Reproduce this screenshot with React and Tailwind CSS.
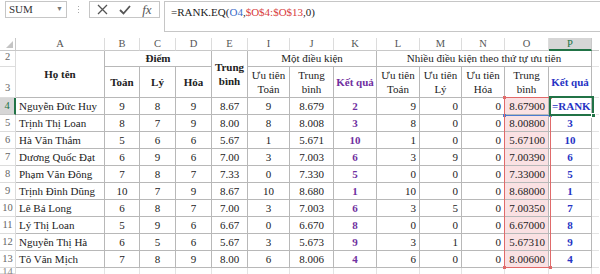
import React from 'react';

const rows = [
  ['Nguyễn Đức Huy', 9, 8, 9, '8.67', 9, '8.679', 2, 9, 0, 0, '8.67900', null],
  ['Trịnh Thị Loan', 8, 7, 9, '8.00', 8, '8.008', 3, 8, 0, 0, '8.00800', 3],
  ['Hà Văn Thắm', 5, 6, 6, '5.67', 1, '5.671', 10, 1, 0, 0, '5.67100', 10],
  ['Dương Quốc Đạt', 6, 9, 6, '7.00', 3, '7.003', 6, 3, 9, 0, '7.00390', 6],
  ['Phạm Văn Đông', 7, 8, 7, '7.33', 0, '7.330', 5, 0, 0, 0, '7.33000', 5],
  ['Trịnh Đình Dũng', 10, 7, 9, '8.67', 10, '8.680', 1, 10, 0, 0, '8.68000', 1],
  ['Lê Bá Long', 6, 8, 7, '7.00', 3, '7.003', 6, 3, 5, 0, '7.00350', 7],
  ['Lý Thị Loan', 5, 9, 6, '6.67', 0, '6.670', 8, 0, 0, 0, '6.67000', 8],
  ['Nguyễn Thị Hà', 6, 5, 6, '5.67', 3, '5.673', 9, 3, 1, 0, '5.67310', 9],
  ['Tô Văn Mịch', 7, 8, 9, '8.00', 6, '8.006', 4, 6, 0, 0, '8.00600', 4],
];

const letters = ['A', 'B', 'C', 'D', 'E', 'I', 'J', 'K', 'L', 'M', 'N', 'O', 'P'];

const Cell = ({ children, className = '' }) => (
  <div className={`border-r border-b border-[#b8b8b8] flex items-center overflow-hidden whitespace-nowrap px-[3px] ${className}`}>
    {children}
  </div>
);

const RowNum = ({ n, active, className = '' }) => (
  <div className={`border-r border-b flex justify-center text-[10.5px] ${active ? 'bg-[#d6d6d6] border-r-2 border-r-[#217346] border-b-[#c8c8c8] text-[#217346]' : 'border-[#dcdcdc] text-[#666]'} ${className}`}>
    {n}
  </div>
);

const Blank = () => <div className="border-b border-[#e3e3e3]" />;

export default function App() {
  return (
    <div className="w-[600px] h-[274px] overflow-hidden bg-white font-['Liberation_Serif',serif] text-[11px] text-[#222]">
      {/* formula bar */}
      <div className="flex h-[38px] items-start pt-[1px]">
        <div className="ml-[5px] w-[62px] h-[17px] border border-[#c6c6c6] flex items-center justify-between px-[3px] text-[11px] text-[#333]">
          <span>SUM</span>
          <span className="text-[7px] text-[#777]">▼</span>
        </div>
        <div className="w-[22px] h-[17px] flex flex-col items-center justify-center gap-[2px]">
          <span className="w-[1px] h-[1px] bg-[#aaa]" />
          <span className="w-[1px] h-[1px] bg-[#aaa]" />
          <span className="w-[1px] h-[1px] bg-[#aaa]" />
        </div>
        <div className="w-[71px] h-[17px] border border-[#c6c6c6] flex items-center justify-around px-[2px]">
          <svg width="11" height="11" viewBox="0 0 11 11" fill="none" stroke="#555" strokeWidth="1.3">
            <path d="M1 1 L10 10 M10 1 L1 10" />
          </svg>
          <svg width="12" height="10" viewBox="0 0 12 10" fill="none" stroke="#555" strokeWidth="1.8">
            <path d="M1 5 L4.5 8.5 L11 1" />
          </svg>
          <span className="italic text-[13px] text-[#555] leading-none">fx</span>
        </div>
        <div className="ml-[4px] flex-1 h-[31px] border border-r-0 border-[#c6c6c6] px-[6px] pt-[2px] text-[11px] text-[#222]">
          =RANK.EQ(<span className="text-[#3a6cc8]">O4</span>,<span className="text-[#d83b3b]">$O$4:$O$13</span>,0)
        </div>
      </div>

      {/* sheet */}
      <div className="relative">
        <div className="grid grid-cols-[16px_89px_35px_36px_36px_36px_42px_44px_43px_43px_42px_43px_44px_43px_7px] grid-rows-[13px_16px_31px_repeat(10,17px)_6px]">
          {/* column header */}
          <div className="border-r border-b border-[#c8c8c8] flex items-end justify-end pr-[2px] pb-[2px]">
            <svg width="7" height="7" viewBox="0 0 7 7"><path d="M7 0 L7 7 L0 7 Z" fill="#c4c4c4" /></svg>
          </div>
          {letters.map((l) => (
            <div
              key={l}
              className={`flex items-center justify-center text-[10.5px] border-b ${l === 'P' ? 'bg-[#d6d6d6] border-b-2 border-b-[#217346] text-[#217346] border-r border-r-[#c8c8c8]' : 'border-r border-[#dcdcdc] border-b-[#c8c8c8] text-[#555]'}`}
            >
              {l}
            </div>
          ))}
          <div className="border-b border-[#c8c8c8]" />

          {/* row 2 */}
          <RowNum n="2" className="items-end pb-[1px]" />
          <Cell className="row-span-2 justify-center font-bold">Họ tên</Cell>
          <Cell className="col-span-3 justify-center font-bold">Điểm</Cell>
          <Cell className="row-span-2 justify-center font-bold text-center leading-[14px] whitespace-normal">Trung<br />bình</Cell>
          <Cell className="col-span-3 justify-center">Một điều kiện</Cell>
          <Cell className="col-span-5 justify-center">Nhiều điều kiện theo thứ tự ưu tiên</Cell>
          <Blank />

          {/* row 3 */}
          <RowNum n="3" className="items-end pb-[1px]" />
          <Cell className="justify-center font-bold">Toán</Cell>
          <Cell className="justify-center font-bold">Lý</Cell>
          <Cell className="justify-center font-bold">Hóa</Cell>
          <Cell className="justify-center text-center leading-[14px]">Ưu tiên<br />Toán</Cell>
          <Cell className="justify-center text-center leading-[14px]">Trung<br />bình</Cell>
          <Cell className="justify-center font-bold text-[#7030a0]">Kết quả</Cell>
          <Cell className="justify-center text-center leading-[14px]">Ưu tiên<br />Toán</Cell>
          <Cell className="justify-center text-center leading-[14px]">Ưu tiên<br />Lý</Cell>
          <Cell className="justify-center text-center leading-[14px]">Ưu tiên<br />Hóa</Cell>
          <Cell className="justify-center text-center leading-[14px]">Trung<br />bình</Cell>
          <Cell className="justify-center font-bold text-[#2633c4]">Kết quả</Cell>
          <Blank />

          {/* data */}
          {rows.map((r, i) => (
            <React.Fragment key={i}>
              <RowNum n={i + 4} active={i === 0} className="items-center" />
              <Cell>{r[0]}</Cell>
              <Cell className="justify-center">{r[1]}</Cell>
              <Cell className="justify-center">{r[2]}</Cell>
              <Cell className="justify-center">{r[3]}</Cell>
              <Cell className="justify-center">{r[4]}</Cell>
              <Cell className="justify-center">{r[5]}</Cell>
              <Cell className="justify-center">{r[6]}</Cell>
              <Cell className="justify-center font-bold text-[#7030a0]">{r[7]}</Cell>
              <Cell className="justify-end">{r[8]}</Cell>
              <Cell className="justify-end">{r[9]}</Cell>
              <Cell className="justify-end">{r[10]}</Cell>
              <Cell className="justify-end bg-[#fae1e3]">{r[11]}</Cell>
              <Cell className="justify-start font-bold text-[#2633c4]">
                {r[12] === null ? '=RANK.' : <span className="w-full text-center">{r[12]}</span>}
              </Cell>
              <Blank />
            </React.Fragment>
          ))}

          {/* row 14 */}
          <RowNum n="14" className="items-start leading-[8px] text-[#888]" />
          {letters.map((l) => (
            <div key={l} className="border-r border-[#e3e3e3]" />
          ))}
          <div />
        </div>

        {/* O4 reference (blue) */}
        <div className="absolute left-[504px] top-[59px] w-[47px] h-[19px] border border-[#4a7bd0]" />
        <span className="absolute left-[503px] top-[76px] w-[3px] h-[3px] bg-[#4a7bd0]" />
        <span className="absolute left-[549px] top-[76px] w-[3px] h-[3px] bg-[#4a7bd0]" />

        {/* range O4:O13 (red) */}
        <div className="absolute left-[504px] top-[59px] w-[47px] h-[171px] border border-[#e06a6a]" />
        <span className="absolute left-[503px] top-[58px] w-[3px] h-[3px] bg-[#e06a6a]" />
        <span className="absolute left-[549px] top-[58px] w-[3px] h-[3px] bg-[#e06a6a]" />
        <span className="absolute left-[503px] top-[228px] w-[3px] h-[3px] bg-[#e06a6a]" />
        <span className="absolute left-[549px] top-[228px] w-[3px] h-[3px] bg-[#e06a6a]" />

        {/* active cell P4 */}
        <div className="absolute left-[549px] top-[58px] w-[45px] h-[20px] border-2 border-[#217346]" />
        <span className="absolute left-[591px] top-[75px] w-[5px] h-[5px] bg-[#217346] border border-white" />
      </div>
    </div>
  );
}
